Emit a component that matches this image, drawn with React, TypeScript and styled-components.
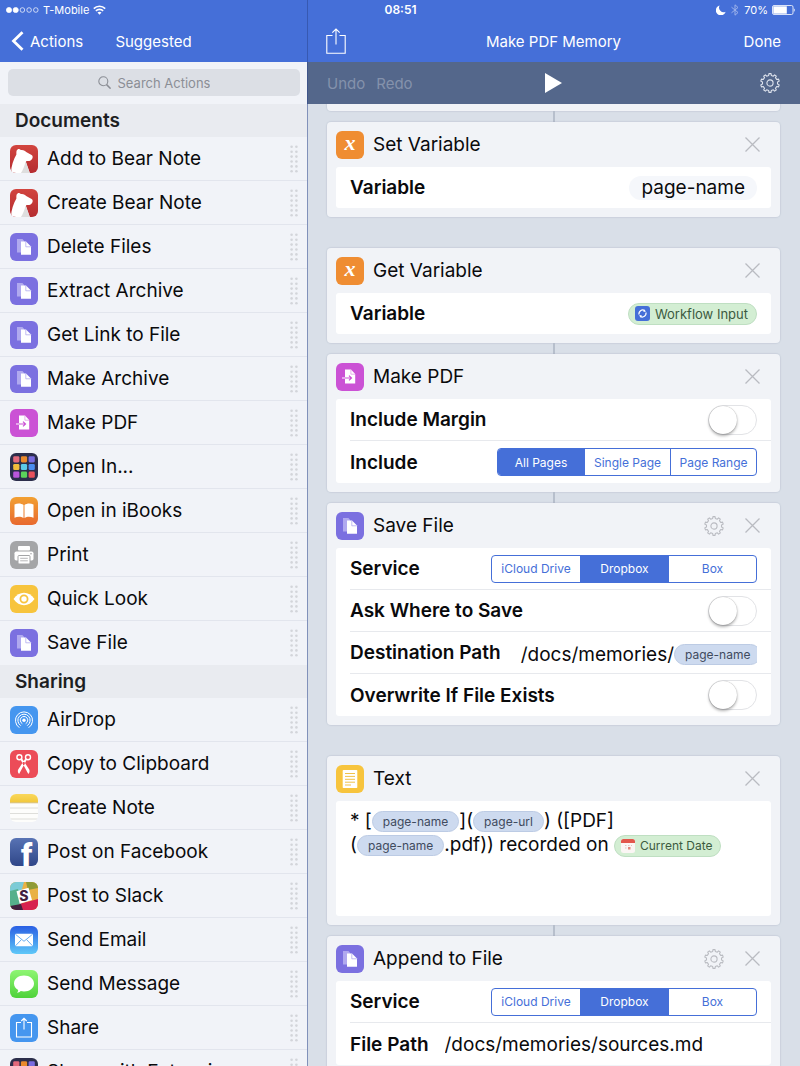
import React from "react";
import styled, { createGlobalStyle, css } from "styled-components";

const BLUE = "#456fd8";

const GlobalStyle = createGlobalStyle`
  *, *::before, *::after { box-sizing: border-box; }
  body {
    margin: 0;
    font-family: Inter, "Liberation Sans", sans-serif;
    color: #0a0a0c;
  }
  button, input { font: inherit; color: inherit; margin: 0; padding: 0; border: 0; background: none; }
  svg { display: block; flex: none; }
`;

/* ---------- Shell ---------- */

const Screen = styled.div`
  position: relative;
  display: flex;
  flex-direction: column;
  height: 100vh;
  overflow: hidden;
  background: ${BLUE};
`;

const SplitLine = styled.div`
  position: absolute;
  top: 0;
  bottom: 0;
  left: 307px;
  width: 1px;
  background: rgba(42, 68, 140, 0.5);
`;

const StatusBar = styled.div`
  display: grid;
  grid-template-columns: 1fr auto 1fr;
  align-items: center;
  height: 20px;
  padding: 0 5px 0 6px;
  color: #fff;
  font-size: 11px;
  line-height: 20px;
`;

const StatusGroup = styled.div<{ $end?: boolean }>`
  display: flex;
  align-items: center;
  gap: 4px;
  justify-content: ${(p) => (p.$end ? "flex-end" : "flex-start")};
`;

const Clock = styled.span`
  font-size: 12px;
  font-weight: 600;
`;

const Split = styled.div`
  display: grid;
  grid-template-columns: 307px minmax(0, 1fr);
  flex: 1;
  min-height: 0;
`;

const Pane = styled.div`
  display: flex;
  flex-direction: column;
  min-height: 0;
`;

const NavBar = styled.header`
  display: grid;
  grid-template-columns: 1fr auto 1fr;
  align-items: center;
  flex: none;
  height: 42px;
  padding: 0 11px;
  color: #fff;
  font-size: 15px;
`;

const EditorNav = styled(NavBar)`
  padding: 0 19px;
`;

const NavTitle = styled.h1`
  margin: 0;
  font-size: 15px;
  font-weight: 400;
`;

const NavButton = styled.button<{ $end?: boolean }>`
  display: flex;
  align-items: center;
  gap: 6px;
  justify-self: ${(p) => (p.$end ? "end" : "start")};
`;

/* ---------- Action list ---------- */

const SearchArea = styled.div`
  flex: none;
  padding: 7px 7px 8px 8px;
  background: #f1f3f8;
`;

const SearchField = styled.label`
  display: flex;
  align-items: center;
  justify-content: center;
  gap: 7px;
  height: 27px;
  border-radius: 5px;
  background: #dcdfe5;
  color: #8b8e95;
`;

const SearchInput = styled.input`
  field-sizing: content;
  font-size: 13px;
  outline: none;
  &::placeholder { color: #8b8e95; opacity: 1; }
`;

const ActionScroll = styled.nav`
  flex: 1;
  min-height: 0;
  overflow: hidden;
  background: #f1f3f8;
`;

const GroupTitle = styled.h2`
  margin: 0;
  padding: 0 15px;
  height: 33px;
  line-height: 33px;
  background: #e9ebf0;
  color: #1d1e22;
  font-size: 19px;
  font-weight: 600;
`;

const ActionList = styled.ul`
  margin: 0;
  padding: 0;
  list-style: none;
`;

const ActionRow = styled.li`
  display: flex;
  align-items: center;
  gap: 9px;
  height: 44px;
  padding: 0 9px 0 10px;
  border-bottom: 1px solid #e2e5ed;
  font-size: 19px;
  white-space: nowrap;
  &:last-child { border-bottom-color: transparent; }
`;

const ActionName = styled.span`
  flex: 1;
`;

/* ---------- Workflow editor ---------- */

const Toolbar = styled.div`
  display: grid;
  grid-template-columns: 1fr auto 1fr;
  align-items: center;
  flex: none;
  height: 42px;
  padding: 0 20px;
  background: #54678b;
  color: #fff;
  font-size: 15px;
`;

const HistoryButtons = styled.div`
  display: flex;
  gap: 11px;
  color: #8492ac;
`;

const Canvas = styled.main`
  flex: 1;
  min-height: 0;
  overflow: hidden;
  padding: 0 20px;
  background: #d9dfe8;
`;

const Connector = styled.div`
  width: 2px;
  height: 11px;
  margin: 0 auto;
  background: #b7bfcc;
`;

const Gap = styled.div`
  height: 31px;
`;

const Card = styled.section`
  padding: 0 9px 9px;
  border-radius: 4px;
  background: #f1f3f7;
  box-shadow: 0 0 1px 1px rgba(150, 162, 182, 0.2);
`;

const CardTail = styled.div`
  height: 7px;
  border-radius: 0 0 4px 4px;
  background: #f1f3f7;
  box-shadow: 0 0 1px 1px rgba(150, 162, 182, 0.2);
`;

const CardHeader = styled.header`
  display: flex;
  align-items: center;
  gap: 9px;
  height: 45px;
`;

const CardTitle = styled.h2`
  flex: 1;
  margin: 0;
  font-size: 19px;
  font-weight: 400;
`;

const CardTools = styled.div`
  display: flex;
  align-items: center;
  gap: 21px;
  padding-right: 11px;
`;

const CardBody = styled.div`
  border-radius: 3px;
  background: #fff;
`;

const Field = styled.div`
  display: flex;
  align-items: center;
  height: 42px;
  margin-left: 14px;
  padding-right: 14px;
  &:not(:last-child) { border-bottom: 1px solid #e7e9ed; }
  &:only-child { height: 41px; }
`;

const fieldLabel = css`
  flex: none;
  font-size: 19px;
  font-weight: 600;
`;

const FieldLabel = styled.label`
  ${fieldLabel}
  margin-right: auto;
`;

const TextLabel = styled.label`
  ${fieldLabel}
  margin-right: 16px;
`;

const PillInput = styled.input`
  field-sizing: content;
  height: 24px;
  padding: 0 12px;
  border-radius: 12px;
  background: #f5f7fb;
  font-size: 19px;
  text-align: right;
`;

const PlainInput = styled.input`
  flex: 1;
  min-width: 0;
  font-size: 19px;
`;

const PathField = styled.div`
  display: flex;
  flex: 1;
  align-items: center;
  min-width: 0;
  padding: 4px 0 0 4px;
  overflow: hidden;
  font-size: 19px;
  white-space: nowrap;
  outline: none;
`;

const Editor = styled.div`
  min-height: 115px;
  padding: 8px 14px;
  font-size: 19px;
  line-height: 24px;
  outline: none;
`;

const Token = styled.span<{ $green?: boolean; $large?: boolean }>`
  display: inline-flex;
  flex: none;
  align-items: center;
  gap: 5px;
  height: ${(p) => (p.$green ? 22 : 21)}px;
  padding: ${(p) => (p.$green ? "0 8px 0 6px" : "0 10px")};
  border: 1px solid ${(p) => (p.$green ? "#bfdfc2" : "#bccbe4")};
  border-radius: 11px;
  background: ${(p) => (p.$green ? "#d3eed3" : "#cddaef")};
  color: ${(p) => (p.$green ? "#3c5a3f" : "#3f4a5e")};
  font-size: ${(p) => (p.$large ? 13 : 12)}px;
  line-height: 18px;
  vertical-align: middle;
`;

const Segments = styled.div`
  display: grid;
  grid-auto-flow: column;
  grid-auto-columns: 1fr;
  height: 28px;
  overflow: hidden;
  border: 1px solid ${BLUE};
  border-radius: 4px;
`;

const Segment = styled.label<{ $wide?: boolean }>`
  position: relative;
  display: flex;
  align-items: center;
  justify-content: center;
  min-width: ${(p) => (p.$wide ? 88 : 86)}px;
  color: ${BLUE};
  font-size: 12px;
  & + & { border-left: 1px solid ${BLUE}; }
  &:has(:checked) { background: ${BLUE}; color: #fff; }
  input { position: absolute; inset: 0; margin: 0; opacity: 0; }
`;

const Switch = styled.input`
  appearance: none;
  display: flex;
  align-items: center;
  width: 49px;
  height: 30px;
  border: 1px solid #e2e3e6;
  border-radius: 15px;
  background: #fff;
  &::before {
    content: "";
    width: 28px;
    height: 28px;
    border-radius: 50%;
    background: #fff;
    box-shadow: 0 2px 3px rgba(0, 0, 0, 0.3), 0 0 1px rgba(0, 0, 0, 0.35);
  }
  &:checked { justify-content: flex-end; background: #4cd964; }
`;

/* ---------- Glyphs ---------- */

const gearPath = (teeth: number, outer: number, inner: number) => {
  const step = (Math.PI * 2) / teeth;
  const points: string[] = [];
  for (let i = 0; i < teeth; i++) {
    const a = i * step - Math.PI / 2;
    const corners: [number, number][] = [
      [a - step * 0.28, inner],
      [a - step * 0.18, outer],
      [a + step * 0.18, outer],
      [a + step * 0.28, inner],
    ];
    corners.forEach(([angle, r]) =>
      points.push(`${(10 + Math.cos(angle) * r).toFixed(2)} ${(10 + Math.sin(angle) * r).toFixed(2)}`)
    );
  }
  return `M${points.join("L")}Z`;
};

const Gear = ({ color }: { color: string }) => (
  <svg width="20" height="20" viewBox="0 0 20 20" fill="none" stroke={color} strokeWidth="1.1" strokeLinejoin="round">
    <path d={gearPath(10, 9.4, 7.6)} />
    <circle cx="10" cy="10" r="3.1" />
  </svg>
);

const Cross = () => (
  <svg width="15" height="15" viewBox="0 0 15 15" fill="none" stroke="#b9bbc1" strokeWidth="1.3">
    <path d="M.5 .5l14 14M14.5 .5l-14 14" />
  </svg>
);

const Grip = () => (
  <svg width="8" height="28" viewBox="0 0 8 28" fill="#d3d5da">
    {[0, 1, 2, 3, 4, 5].map((r) => (
      <React.Fragment key={r}>
        <circle cx="1.6" cy={1.8 + r * 4.9} r="1.3" />
        <circle cx="6.4" cy={1.8 + r * 4.9} r="1.3" />
      </React.Fragment>
    ))}
  </svg>
);

const ShareGlyph = () => (
  <svg width="20" height="26" viewBox="0 0 20 26" fill="none" stroke="#fff" strokeWidth="1.1">
    <path d="M6.5 7.5H.8v17.7h18.4V7.5h-5.7M10 16.500V1M6.300 4.700L10 1l3.700 3.700" />
  </svg>
);

/* ---------- Action icons ---------- */

type IconName =
  | "bear" | "files" | "pdf" | "grid" | "books" | "print" | "eye" | "airdrop" | "scissors"
  | "note" | "facebook" | "slack" | "mail" | "message" | "share" | "variable" | "text";

const gridColors = ["#e36a7c", "#ea8a2c", "#7a6be0", "#f2bd3c", "#5ccbe8", "#4a8df0", "#b956dc", "#5bd45b", "#e8515c"];

const art: Record<IconName, React.ReactNode> = {
  bear: (
    <>
      <rect width="28" height="28" fill="url(#gBear)" />
      <path d="M1 28C1.200 21 3.500 14.500 6.400 9.500C6.300 7.500 6.200 5.200 7.600 4.400C8.800 3.800 10 4.200 10.800 5C13.300 4.600 15.200 5.600 16.600 7.300L21.600 9.900C23 10.800 22.900 12.400 22.200 13.700C21.200 15.500 19.500 16.200 17 15.900C16.200 15.900 15.800 16.500 16.100 17.400L19.800 28Z" fill="#fff" />
      <path d="M11 28C13 24.500 14.600 21 15.400 17.200C15.500 16.500 15.900 16.900 16.100 17.400L19.800 28Z" fill="#dedede" />
    </>
  ),
  files: (
    <>
      <rect width="28" height="28" fill="#7b70e0" />
      <path d="M7 6h5.500l2 2.500-3 2v9H7z" fill="#b0a9ef" />
      <path d="M11 8.500h5l5 5v8.300H11z" fill="#fff" />
      <path d="M15.800 8.800v5h5" fill="none" stroke="#a79fee" strokeWidth=".7" />
    </>
  ),
  pdf: (
    <>
      <rect width="28" height="28" fill="#cb52d5" />
      <path d="M9 6.500h6l4.200 4.500v9.500H9z" fill="#fff" />
      <path d="M14.900 6.700v4.500h4.200" fill="none" stroke="#dd90e3" strokeWidth=".7" />
      <path d="M6 15h3" stroke="#fff" strokeWidth="1.200" />
      <path d="M9 15h6.300M13 12.600l2.500 2.400-2.500 2.400" stroke="#cb52d5" strokeWidth="1.200" fill="none" />
    </>
  ),
  grid: (
    <>
      <rect width="28" height="28" fill="#2c2e4b" />
      {gridColors.map((c, i) => (
        <rect key={c} x={3.200 + (i % 3) * 7.700} y={3.200 + Math.floor(i / 3) * 7.700} width="6.200" height="6.200" rx="1.300" fill={c} />
      ))}
    </>
  ),
  books: (
    <>
      <rect width="28" height="28" fill="url(#gBooks)" />
      <path d="M4.500 7.500C7.500 6 11 6 13.500 8v13C11 19.300 7.500 19.300 4.500 20.800zM23.500 7.500C20.500 6 17 6 14.500 8v13c2.500-1.700 6-1.700 9-.2z" fill="#fff" />
    </>
  ),
  print: (
    <>
      <rect width="28" height="28" fill="#a4a5a7" />
      <rect x="8" y="5" width="12" height="4.500" rx="1" fill="#fff" />
      <rect x="4.500" y="10.500" width="19" height="9" rx="1.800" fill="#fff" />
      <rect x="8" y="14.500" width="12" height="8.500" rx="1" fill="#fff" stroke="#a4a5a7" />
      <path d="M10.200 17.300h7.600M10.200 19.800h7.600" stroke="#a4a5a7" strokeWidth=".8" />
      <circle cx="21" cy="12.700" r=".8" fill="#a4a5a7" />
    </>
  ),
  eye: (
    <>
      <rect width="28" height="28" fill="#f7c43d" />
      <path d="M3.500 14C6.500 9.800 10 7.800 14 7.800S21.500 9.800 24.500 14C21.500 18.200 18 20.200 14 20.200S6.500 18.200 3.500 14z" fill="#fff" />
      <circle cx="14" cy="14" r="3.600" fill="none" stroke="#f7c43d" strokeWidth="1.800" />
    </>
  ),
  airdrop: (
    <>
      <rect width="28" height="28" fill="#4596ef" />
      <circle cx="14" cy="14.300" r="1.700" fill="#fff" />
      <g fill="none" stroke="#fff" strokeLinecap="round">
        <path d="M12 17.500a3.800 3.800 0 1 1 4 0M10.500 19.500a6.200 6.200 0 1 1 7 0M9 21.500a8.600 8.600 0 1 1 10 0" />
      </g>
    </>
  ),
  scissors: (
    <>
      <rect width="28" height="28" fill="#ec4c58" />
      <g fill="none" stroke="#fff" strokeWidth="1.400">
        <circle cx="9.400" cy="7.300" r="2.500" />
        <circle cx="18" cy="7.300" r="2.500" />
      </g>
      <path d="M10.500 9.600L18.300 24c1.300-1.200 1.600-2.800.9-4.400L12.400 9zM16.900 9.600L9.100 24c-1.300-1.200-1.600-2.800-.9-4.400L15 9z" fill="#fff" />
      <circle cx="13.700" cy="14.300" r=".7" fill="#ec4c58" />
    </>
  ),
  note: (
    <>
      <rect width="28" height="28" fill="#fdfdfb" />
      <rect width="28" height="8.500" fill="url(#gNote)" />
      <path d="M0 8.800h28" stroke="#c9a84e" strokeWidth=".7" />
      <path d="M0 14h28M0 19.500h28M0 25h28" stroke="#d5d5d2" strokeWidth=".8" />
    </>
  ),
  facebook: (
    <>
      <rect width="28" height="28" fill="url(#gFacebook)" />
      <text x="11" y="27.500" fontFamily="Roboto, sans-serif" fontWeight="900" fontSize="31" fill="#fff">f</text>
    </>
  ),
  slack: (
    <>
      <rect width="28" height="28" fill="#e9b144" />
      <path d="M0 0h14L10 14 0 20z" fill="#7ccbd6" />
      <path d="M0 9l8-2 4 16-12 3z" fill="#56b08b" />
      <path d="M16 0h12v6l-10 2z" fill="#8f9b36" />
      <path d="M28 17v11H12l-3-6z" fill="#d7234f" />
      <path d="M0 24l11-2 2 6H0z" fill="#42203f" />
      <path d="M6.500 9.200L18.500 5.800 22 18l-12.300 3.800z" fill="#fff" />
      <text x="9.300" y="19" fontFamily="Inter, sans-serif" fontWeight="800" fontSize="14" fill="#42203f">S</text>
    </>
  ),
  mail: (
    <>
      <rect width="28" height="28" fill="url(#gMail)" />
      <rect x="5" y="7.800" width="18" height="12.500" rx="1.200" fill="#fff" />
      <path d="M5.500 8.300l8.500 7 8.500-7M5.500 19.800l6-6.300M22.500 19.800l-6-6.300" fill="none" stroke="#5aa5ee" strokeWidth=".9" />
    </>
  ),
  message: (
    <>
      <rect width="28" height="28" fill="url(#gMessage)" />
      <path d="M14 5.500c5.700 0 10 3.500 10 8s-4.300 8-10 8c-1.200 0-2.300-.1-3.300-.4-.9 1-2.200 1.600-3.700 1.700.8-.8 1.200-1.700 1.200-2.700C5.600 18.700 4 16.300 4 13.500c0-4.500 4.300-8 10-8z" fill="#fff" />
    </>
  ),
  share: (
    <>
      <rect width="28" height="28" fill="#4596ef" />
      <path d="M11 8.500H6.500v14.500h15V8.500H17M14 15.500V4.500M11.300 7L14 4.300 16.700 7" fill="none" stroke="#fff" strokeWidth="1.100" />
    </>
  ),
  variable: (
    <>
      <rect width="28" height="28" fill="#ef8d32" />
      <text x="14" y="19" textAnchor="middle" fontFamily="Liberation Serif, serif" fontStyle="italic" fontWeight="700" fontSize="22" fill="#fff">x</text>
    </>
  ),
  text: (
    <>
      <rect width="28" height="28" fill="#f7c43d" />
      <rect x="6.700" y="5" width="14.600" height="18" rx=".8" fill="#fff" />
      <path d="M9 8.500h10M9 11.400h10M9 14.300h10M9 17.200h10M9 20h6" stroke="#f0c24a" />
    </>
  ),
};

const IconSvg = styled.svg`
  border-radius: 6px;
`;

const AppIcon = ({ name }: { name: IconName }) => (
  <IconSvg width="28" height="28" viewBox="0 0 28 28" aria-hidden="true">{art[name]}</IconSvg>
);

const HiddenSvg = styled.svg`
  position: absolute;
`;

const gradients: [string, string, string][] = [
  ["gBear", "#d2453f", "#b52c30"],
  ["gBooks", "#f2a032", "#e8692f"],
  ["gNote", "#f9d75c", "#f2c83a"],
  ["gFacebook", "#5873b4", "#2f4688"],
  ["gMail", "#2a5fe4", "#5fc8f8"],
  ["gMessage", "#8ef573", "#4fd23a"],
];

const GradientDefs = () => (
  <HiddenSvg width="0" height="0" aria-hidden="true">
    <defs>
      {gradients.map(([id, from, to]) => (
        <linearGradient key={id} id={id} x1="0" y1="0" x2="0" y2="1">
          <stop offset="0" stopColor={from} />
          <stop offset="1" stopColor={to} />
        </linearGradient>
      ))}
    </defs>
  </HiddenSvg>
);

/* ---------- Data ---------- */

const groups: { title: string; items: [IconName, string][] }[] = [
  {
    title: "Documents",
    items: [
      ["bear", "Add to Bear Note"],
      ["bear", "Create Bear Note"],
      ["files", "Delete Files"],
      ["files", "Extract Archive"],
      ["files", "Get Link to File"],
      ["files", "Make Archive"],
      ["pdf", "Make PDF"],
      ["grid", "Open In..."],
      ["books", "Open in iBooks"],
      ["print", "Print"],
      ["eye", "Quick Look"],
      ["files", "Save File"],
    ],
  },
  {
    title: "Sharing",
    items: [
      ["airdrop", "AirDrop"],
      ["scissors", "Copy to Clipboard"],
      ["note", "Create Note"],
      ["facebook", "Post on Facebook"],
      ["slack", "Post to Slack"],
      ["mail", "Send Email"],
      ["message", "Send Message"],
      ["share", "Share"],
      ["grid", "Share with Extensions"],
    ],
  },
];

/* ---------- Composite parts ---------- */

const ActionCard = ({
  icon, title, settings, children,
}: { icon: IconName; title: string; settings?: boolean; children: React.ReactNode }) => (
  <Card>
    <CardHeader>
      <AppIcon name={icon} />
      <CardTitle>{title}</CardTitle>
      <CardTools>
        {settings && <button type="button" aria-label="Settings"><Gear color="#b9bbc1" /></button>}
        <button type="button" aria-label="Remove"><Cross /></button>
      </CardTools>
    </CardHeader>
    <CardBody>{children}</CardBody>
  </Card>
);

const Choice = ({
  id, label, options, value, wide,
}: { id: string; label: string; options: string[]; value: string; wide?: boolean }) => (
  <Field>
    <FieldLabel as="span" id={id}>{label}</FieldLabel>
    <Segments role="radiogroup" aria-labelledby={id}>
      {options.map((o) => (
        <Segment key={o} $wide={wide}>
          <input type="radio" name={id} defaultChecked={o === value} />
          {o}
        </Segment>
      ))}
    </Segments>
  </Field>
);

const Toggle = ({ id, label }: { id: string; label: string }) => (
  <Field>
    <FieldLabel htmlFor={id}>{label}</FieldLabel>
    <Switch id={id} type="checkbox" role="switch" />
  </Field>
);

const services = ["iCloud Drive", "Dropbox", "Box"];

export default function App() {
  return (
    <Screen>
      <GlobalStyle />
      <GradientDefs />
      <StatusBar>
        <StatusGroup>
          <svg width="33" height="6" viewBox="0 0 33 6" fill="none" stroke="#fff" strokeWidth=".7">
            <circle cx="3" cy="3" r="2.600" fill="#fff" />
            <circle cx="9.700" cy="3" r="2.600" fill="#fff" />
            <circle cx="16.400" cy="3" r="2.300" />
            <circle cx="23.100" cy="3" r="2.300" />
            <circle cx="29.800" cy="3" r="2.300" />
          </svg>
          T-Mobile
          <svg width="13" height="10" viewBox="0 0 13 10" fill="none" stroke="#fff" strokeWidth="1.600">
            <path d="M.8 3.600a8 8 0 0 1 11.400 0M2.900 5.900a5 5 0 0 1 7.200 0" />
            <path d="M4.500 7.600a2.900 2.900 0 0 1 4 0L6.500 9.800z" fill="#fff" stroke="none" />
          </svg>
        </StatusGroup>
        <Clock>08:51</Clock>
        <StatusGroup $end>
          <svg width="10" height="10" viewBox="0 0 10 10" fill="#fff">
            <path d="M3.600.5A5 5 0 1 0 9.600 6.800 4.600 4.600 0 0 1 3.600.5z" />
          </svg>
          <svg width="10" height="12" viewBox="0 0 10 12" fill="none" stroke="#9db2ea">
            <path d="M1.500 3.200l6.500 5.300L5 11.200V.8l3 2.700-6.500 5.300" />
          </svg>
          70%
          <svg width="23" height="10" viewBox="0 0 23 10">
            <rect x=".5" y=".5" width="20.500" height="9" rx="1.500" fill="none" stroke="#fff" strokeWidth=".8" />
            <rect x="1.300" y="1.300" width="13.500" height="7.400" fill="#fff" />
            <path d="M21.800 3.200c1.200.4 1.200 3.200 0 3.600z" fill="#fff" />
          </svg>
        </StatusGroup>
      </StatusBar>
      <Split>
        <Pane>
          <NavBar>
            <NavButton type="button">
              <svg width="13" height="20" viewBox="0 0 13 20" fill="none" stroke="#fff" strokeWidth="2.800">
                <path d="M11.500 1.200L2.500 10l9 8.800" />
              </svg>
              Actions
            </NavButton>
            <NavTitle>Suggested</NavTitle>
          </NavBar>
          <SearchArea>
            <SearchField>
              <svg width="13" height="13" viewBox="0 0 13 13" fill="none" stroke="#8b8e95" strokeWidth="1.100">
                <circle cx="5.300" cy="5.300" r="4.500" />
                <path d="M8.600 8.600l4 4" strokeWidth="1.500" />
              </svg>
              <SearchInput type="text" placeholder="Search Actions" aria-label="Search Actions" />
            </SearchField>
          </SearchArea>
          <ActionScroll>
            {groups.map((g) => (
              <section key={g.title}>
                <GroupTitle>{g.title}</GroupTitle>
                <ActionList>
                  {g.items.map(([icon, name]) => (
                    <ActionRow key={name}>
                      <AppIcon name={icon} />
                      <ActionName>{name}</ActionName>
                      <Grip />
                    </ActionRow>
                  ))}
                </ActionList>
              </section>
            ))}
          </ActionScroll>
        </Pane>
        <Pane>
          <EditorNav>
            <NavButton type="button" aria-label="Share"><ShareGlyph /></NavButton>
            <NavTitle>Make PDF Memory</NavTitle>
            <NavButton type="button" $end>Done</NavButton>
          </EditorNav>
          <Toolbar>
            <HistoryButtons>
              <button type="button">Undo</button>
              <button type="button">Redo</button>
            </HistoryButtons>
            <button type="button" aria-label="Run">
              <svg width="17" height="20" viewBox="0 0 17 20" fill="#fff"><path d="M0 0l17 10L0 20z" /></svg>
            </button>
            <NavButton type="button" $end aria-label="Settings"><Gear color="#dfe4ee" /></NavButton>
          </Toolbar>
          <Canvas>
            <CardTail />
            <Connector />
            <ActionCard icon="variable" title="Set Variable">
              <Field>
                <FieldLabel htmlFor="set-variable">Variable</FieldLabel>
                <PillInput id="set-variable" type="text" defaultValue="page-name" />
              </Field>
            </ActionCard>
            <Gap />
            <ActionCard icon="variable" title="Get Variable">
              <Field>
                <FieldLabel as="span">Variable</FieldLabel>
                <Token $green $large>
                  <svg width="15" height="15" viewBox="0 0 15 15" fill="none">
                    <rect width="15" height="15" rx="3" fill={BLUE} />
                    <path d="M4.100 8.500a3.600 3.600 0 0 1 5.600-3.800M10.900 6.500a3.600 3.600 0 0 1-5.600 3.800" stroke="#fff" strokeWidth="1.200" />
                    <path d="M9 3.200l2 2.300-2.600.5zM6 11.800L4 9.500l2.600-.5z" fill="#fff" />
                  </svg>
                  Workflow Input
                </Token>
              </Field>
            </ActionCard>
            <Connector />
            <ActionCard icon="pdf" title="Make PDF">
              <Toggle id="include-margin" label="Include Margin" />
              <Choice id="include" label="Include" options={["All Pages", "Single Page", "Page Range"]} value="All Pages" />
            </ActionCard>
            <Connector />
            <ActionCard icon="files" title="Save File" settings>
              <Choice id="save-service" label="Service" options={services} value="Dropbox" wide />
              <Toggle id="ask-where" label="Ask Where to Save" />
              <Field>
                <TextLabel as="span" id="destination">Destination Path</TextLabel>
                <PathField role="textbox" aria-labelledby="destination">
                  /docs/memories/<Token>page-name</Token>
                </PathField>
              </Field>
              <Toggle id="overwrite" label="Overwrite If File Exists" />
            </ActionCard>
            <Gap />
            <ActionCard icon="text" title="Text">
              <Editor role="textbox" aria-multiline="true" aria-label="Text">
                * [<Token>page-name</Token>](<Token>page-url</Token>) ([PDF]
                <br />
                (<Token>page-name</Token>.pdf)) recorded on{" "}
                <Token $green>
                  <svg width="14" height="14" viewBox="0 0 14 14">
                    <rect width="14" height="14" rx="2.500" fill="#fbf6f4" />
                    <path d="M0 4V2.500A2.500 2.500 0 0 1 2.500 0h9A2.500 2.500 0 0 1 14 2.500V4z" fill="#e2574c" />
                    <path d="M4 6.500h1.500M7 6.500h1.500M4 9h1.500M10 6.500h1" stroke="#d9c6c2" />
                    <rect x="7" y="8" width="2.500" height="2.500" fill="#e2877c" />
                  </svg>
                  Current Date
                </Token>
              </Editor>
            </ActionCard>
            <Connector />
            <ActionCard icon="files" title="Append to File" settings>
              <Choice id="append-service" label="Service" options={services} value="Dropbox" wide />
              <Field>
                <TextLabel htmlFor="file-path">File Path</TextLabel>
                <PlainInput id="file-path" type="text" defaultValue="/docs/memories/sources.md" />
              </Field>
            </ActionCard>
          </Canvas>
        </Pane>
      </Split>
      <SplitLine />
    </Screen>
  );
}
